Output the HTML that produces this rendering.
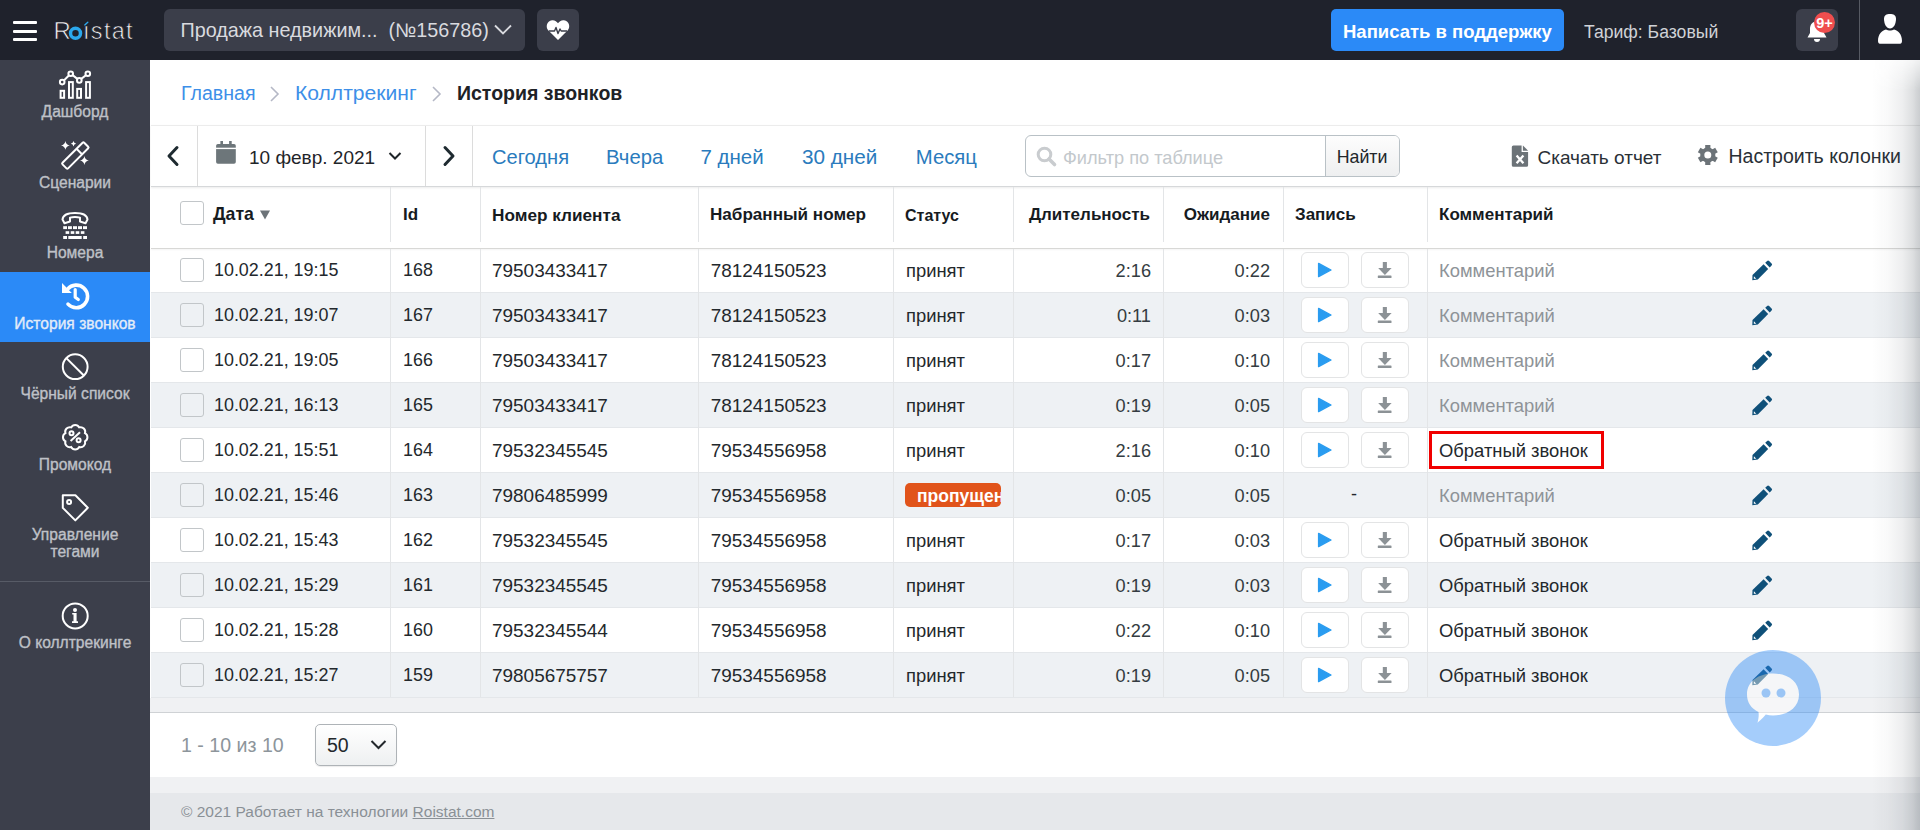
<!DOCTYPE html>
<html><head><meta charset="utf-8"><title>Roistat — История звонков</title>
<style>
html,body{margin:0;padding:0;width:1920px;height:830px;overflow:hidden;background:#fff;font-family:"Liberation Sans", sans-serif;}
.b{position:absolute;box-sizing:border-box;}
.t{position:absolute;white-space:pre;font-family:"Liberation Sans", sans-serif;}
svg.b{overflow:visible;}
</style></head><body>
<div class="b" style="left:0px;top:0px;width:1920px;height:60px;background:#1f222c;"></div>
<div class="b" style="left:13px;top:21px;width:24px;height:3px;background:#fff;border-radius:1px;"></div>
<div class="b" style="left:13px;top:29.5px;width:24px;height:3px;background:#fff;border-radius:1px;"></div>
<div class="b" style="left:13px;top:38px;width:24px;height:3px;background:#fff;border-radius:1px;"></div>
<div class="t" style="left:53.5px;top:15.38px;font-size:24px;line-height:31px;color:#f4f4f4;-webkit-text-stroke:0.7px #1f222c;">R</div>
<div class="t" style="left:83px;top:15.56px;font-size:23.5px;line-height:31px;color:#f4f4f4;letter-spacing:1.3px;-webkit-text-stroke:0.7px #1f222c;">ıstat</div>
<svg class="b" style="left:66px;top:24px" width="20" height="20" viewBox="0 0 20 20"><circle cx="9.5" cy="9.3" r="5" fill="none" stroke="#2ba8ec" stroke-width="3.5"/><path d="M18.8 0.9 L21.8 -1.8" stroke="#2ba8ec" stroke-width="1.4" stroke-linecap="round"/></svg>
<div class="b" style="left:164px;top:9px;width:361px;height:42px;background:#3b3e4a;border-radius:6px;"></div>
<div class="t" style="left:180.5px;top:17.14px;font-size:19.8px;line-height:26px;color:#d9dadf;">Продажа недвижим...&nbsp; (№156786)</div>
<svg class="b" style="left:493px;top:24px" width="20" height="12" viewBox="0 0 20 12"><path d="M2 1.5 L10 9.5 L18 1.5" fill="none" stroke="#d9dadf" stroke-width="1.8"/></svg>
<div class="b" style="left:537px;top:9px;width:42px;height:42px;background:#3b3e4a;border-radius:6px;"></div>
<svg class="b" style="left:546px;top:19px" width="24" height="22" viewBox="0 0 24 22"><path d="M12 21 L2.2 11.2 C-0.5 8.3 0.5 2 6 1.2 C8.8 0.9 10.8 2.5 12 4.2 C13.2 2.5 15.2 0.9 18 1.2 C23.5 2 24.5 8.3 21.8 11.2 Z" fill="#fff"/><path d="M3 12 L8.5 12 L10 8.5 L12 14.5 L14 10 L15.2 12 L21 12" fill="none" stroke="#3b3e4a" stroke-width="1.4" stroke-linejoin="round"/></svg>
<div class="b" style="left:1331px;top:9px;width:233px;height:42px;background:#2b8af7;border-radius:5px;"></div>
<div class="t" style="left:1343px;top:19.59px;font-size:18.5px;line-height:24px;color:#fff;font-weight:700;">Написать в поддержку</div>
<div class="t" style="left:1584px;top:21.40px;font-size:17.6px;line-height:23px;color:#d0d2d7;">Тариф: Базовый</div>
<div class="b" style="left:1796px;top:9px;width:42px;height:42px;background:#3b3e4a;border-radius:6px;"></div>
<svg class="b" style="left:1806px;top:20px" width="22" height="23" viewBox="0 0 22 23"><path d="M11 1.5 C6 1.5 4 5 4 9 L4 13 L1.5 17.5 L20.5 17.5 L18 13 L18 9 C18 5 16 1.5 11 1.5 Z" fill="#fff"/><path d="M8 19 A3 3 0 0 0 14 19 Z" fill="#fff"/></svg>
<div class="b" style="left:1814px;top:12px;width:21px;height:21px;border-radius:50%;background:#ef4e4e;"></div>
<div class="t" style="left:1812.5px;width:24px;top:13.78px;text-align:center;font-size:14.5px;line-height:19px;color:#fff;font-weight:700;">9+</div>
<div class="b" style="left:1859px;top:0px;width:1px;height:60px;background:#565a63;"></div>
<svg class="b" style="left:1877px;top:13px" width="26" height="32" viewBox="0 0 26 32"><path d="M7 6 C7 2 9.5 1 13 1 C16.5 1 19 2 19 6 C19 11 16.5 15.5 13 15.5 C9.5 15.5 7 11 7 6 Z" fill="#fff"/><path d="M1 28 C1 21 5 17.5 9 16.5 C10.5 17.3 11.5 17.6 13 17.6 C14.5 17.6 15.5 17.3 17 16.5 C21 17.5 25 21 25 28 C25 30 24 30.8 22 30.8 L4 30.8 C2 30.8 1 30 1 28 Z" fill="#fff"/></svg>
<div class="b" style="left:0px;top:60px;width:150px;height:770px;background:#3c3f4b;"></div>
<div class="b" style="left:0px;top:272px;width:150px;height:70px;background:#2b8af7;"></div>
<div class="b" style="left:0px;top:581px;width:150px;height:1px;background:#575b66;"></div>
<svg class="b" style="left:55px;top:65px" width="40" height="40" viewBox="0 0 40 40"><g stroke="#fff" fill="none" stroke-width="2"><polyline points="7.2,17.1 15.7,8.7 24.3,15.4 32.8,8.7"/><circle cx="7.2" cy="17.1" r="2.3" fill="#3c3f4b"/><circle cx="15.7" cy="8.7" r="2.3" fill="#3c3f4b"/><circle cx="24.3" cy="15.4" r="2.3" fill="#3c3f4b"/><circle cx="32.8" cy="8.7" r="2.3" fill="#3c3f4b"/><rect x="5.6" y="25.8" width="3.5" height="7"/><rect x="14" y="17.1" width="3.8" height="15.7"/><rect x="22.2" y="23.9" width="3.8" height="8.9"/><rect x="31.1" y="17.1" width="3.8" height="15.7"/></g></svg>
<svg class="b" style="left:55px;top:135px" width="40" height="40" viewBox="0 0 40 40"><g stroke="#fff" fill="none" stroke-width="2"><path d="M7.5 27.8 L27.6 7.7 Q28.4 6.9 29.2 7.7 L33.2 11.7 Q34 12.5 33.2 13.3 L13.1 33.4 Q12.3 34.2 11.5 33.4 L7.5 29.4 Q6.7 28.6 7.5 27.8 Z"/><line x1="21.5" y1="13.8" x2="27" y2="19.3"/></g><g fill="#fff"><path d="M10.4 6 Q11 9.8 14.8 10.4 Q11 11 10.4 14.8 Q9.8 11 6 10.4 Q9.8 9.8 10.4 6 Z"/><path d="M18.5 6 Q18.9 8.3 21.2 8.7 Q18.9 9.1 18.5 11.4 Q18.1 9.1 15.8 8.7 Q18.1 8.3 18.5 6 Z"/><path d="M29.4 21.1 Q30 24.9 33.8 25.5 Q30 26.1 29.4 29.9 Q28.8 26.1 25 25.5 Q28.8 24.9 29.4 21.1 Z"/></g></svg>
<svg class="b" style="left:55px;top:205px" width="40" height="40" viewBox="0 0 40 40"><path d="M7.5 14.5 Q8 8 20 8 Q32 8 32.5 14.5 L30.5 18.2 L25 16.5 L25 12.6 Q20 11.4 15 12.6 L15 16.5 L9.5 18.2 Z" stroke="#fff" fill="none" stroke-width="2" stroke-linejoin="round"/><g fill="#fff"><rect x="8.2" y="21.2" width="3.8" height="2.9"/><rect x="13" y="21.2" width="3.9" height="2.9"/><rect x="18" y="21.2" width="4" height="2.9"/><rect x="23" y="21.2" width="4" height="2.9"/><rect x="28" y="21.2" width="4" height="2.9"/><rect x="10.6" y="26.2" width="3.6" height="2.7"/><rect x="15.7" y="26.2" width="3.6" height="2.7"/><rect x="20.7" y="26.2" width="3.6" height="2.7"/><rect x="25.8" y="26.2" width="3.6" height="2.7"/><rect x="8.2" y="31" width="3.8" height="3"/><rect x="13.3" y="31" width="13.4" height="3"/><rect x="28.2" y="31" width="3.8" height="3"/></g></svg>
<svg class="b" style="left:55px;top:276px" width="40" height="40" viewBox="0 0 40 40"><path d="M12.6 13.2 A11.3 11.3 0 1 1 13 28.1" fill="none" stroke="#fff" stroke-width="3.6" stroke-linecap="round"/><path d="M7 7 L7 16.9 L16.8 16.9 Z" fill="#fff"/><path d="M20.2 13.5 L20.2 21.2 L23.3 23.5" fill="none" stroke="#fff" stroke-width="3.2" stroke-linecap="round" stroke-linejoin="round"/></svg>
<svg class="b" style="left:55px;top:346px" width="40" height="40" viewBox="0 0 40 40"><g stroke="#fff" fill="none" stroke-width="2"><circle cx="20.2" cy="20.7" r="12.4"/><line x1="11.6" y1="12.4" x2="28.6" y2="29.2"/></g></svg>
<svg class="b" style="left:55px;top:417px" width="40" height="40" viewBox="0 0 40 40"><g stroke="#fff" fill="none" stroke-width="2"><path d="M16.14 10.41 A4.6 4.6 0 0 1 24.26 10.41 A4.6 4.6 0 0 1 29.99 16.14 A4.6 4.6 0 0 1 29.99 24.26 A4.6 4.6 0 0 1 24.26 29.99 A4.6 4.6 0 0 1 16.14 29.99 A4.6 4.6 0 0 1 10.41 24.26 A4.6 4.6 0 0 1 10.41 16.14 A4.6 4.6 0 0 1 16.14 10.41 Z"/><circle cx="16.5" cy="16.3" r="2"/><circle cx="23.6" cy="23.2" r="2"/><line x1="15.6" y1="24" x2="25" y2="15.2"/></g></svg>
<svg class="b" style="left:55px;top:488px" width="40" height="40" viewBox="0 0 40 40"><g stroke="#fff" fill="none" stroke-width="2" stroke-linejoin="round"><path d="M7.8 7.3 L20.4 7.3 L32.8 19.8 L20.3 32.4 L7.8 19.9 Z"/><circle cx="14.1" cy="14" r="2"/></g></svg>
<svg class="b" style="left:55px;top:596px" width="40" height="40" viewBox="0 0 40 40"><circle cx="20.2" cy="19.9" r="12.5" stroke="#fff" fill="none" stroke-width="2"/><g fill="#fff"><circle cx="20" cy="14" r="2"/><path d="M17.2 17 L21.6 17 L21.6 25.3 L23 25.3 L23 27 L17 27 L17 25.3 L18.5 25.3 L18.5 18.5 L17.2 18.5 Z"/></g></svg>
<div class="t" style="left:0.0px;width:150px;top:102.39px;text-align:center;font-size:15.6px;line-height:20px;color:#bfc1c7;-webkit-text-stroke:0.35px currentColor;">Дашборд</div>
<div class="t" style="left:0.0px;width:150px;top:173.09px;text-align:center;font-size:15.6px;line-height:20px;color:#bfc1c7;-webkit-text-stroke:0.35px currentColor;">Сценарии</div>
<div class="t" style="left:0.0px;width:150px;top:242.79px;text-align:center;font-size:15.6px;line-height:20px;color:#bfc1c7;-webkit-text-stroke:0.35px currentColor;">Номера</div>
<div class="t" style="left:0.0px;width:150px;top:313.99px;text-align:center;font-size:15.6px;line-height:20px;color:#e4ecf8;-webkit-text-stroke:0.35px currentColor;">История звонков</div>
<div class="t" style="left:0.0px;width:150px;top:384.29px;text-align:center;font-size:15.6px;line-height:20px;color:#bfc1c7;-webkit-text-stroke:0.35px currentColor;">Чёрный список</div>
<div class="t" style="left:0.0px;width:150px;top:455.29px;text-align:center;font-size:15.6px;line-height:20px;color:#bfc1c7;-webkit-text-stroke:0.35px currentColor;">Промокод</div>
<div class="t" style="left:0.0px;width:150px;top:524.99px;text-align:center;font-size:15.6px;line-height:20px;color:#bfc1c7;-webkit-text-stroke:0.35px currentColor;">Управление</div>
<div class="t" style="left:0.0px;width:150px;top:542.29px;text-align:center;font-size:15.6px;line-height:20px;color:#bfc1c7;-webkit-text-stroke:0.35px currentColor;">тегами</div>
<div class="t" style="left:0.0px;width:150px;top:633.19px;text-align:center;font-size:15.6px;line-height:20px;color:#bfc1c7;-webkit-text-stroke:0.35px currentColor;">О коллтрекинге</div>
<div class="t" style="left:181px;top:80.71px;font-size:19.6px;line-height:25px;color:#3d8fe8;">Главная</div>
<svg class="b" style="left:268px;top:85px" width="14" height="18" viewBox="0 0 14 18"><path d="M3 2 L10 9 L3 16" fill="none" stroke="#b5b8c6" stroke-width="1.6"/></svg>
<div class="t" style="left:295px;top:79.19px;font-size:21.1px;line-height:27px;color:#3d8fe8;">Коллтрекинг</div>
<svg class="b" style="left:430px;top:85px" width="14" height="18" viewBox="0 0 14 18"><path d="M3 2 L10 9 L3 16" fill="none" stroke="#b5b8c6" stroke-width="1.6"/></svg>
<div class="t" style="left:457px;top:80.74px;font-size:19.5px;line-height:25px;color:#1e2226;font-weight:700;">История звонков</div>
<div class="b" style="left:151px;top:125px;width:1769px;height:62px;border-top:1px solid #ececec;border-bottom:1px solid #d6d8da;box-shadow:0 1px 2px rgba(0,0,0,0.08);background:#fff;"></div>
<div class="b" style="left:197px;top:126px;width:1px;height:60px;background:#dcdcdc;"></div>
<div class="b" style="left:425px;top:126px;width:1px;height:60px;background:#dcdcdc;"></div>
<div class="b" style="left:472px;top:126px;width:1px;height:60px;background:#dcdcdc;"></div>
<svg class="b" style="left:164px;top:145px" width="18" height="22" viewBox="0 0 18 22"><path d="M13 2.5 L5 11 L13 19.5" fill="none" stroke="#1e2a30" stroke-width="3" stroke-linecap="round" stroke-linejoin="round"/></svg>
<svg class="b" style="left:440px;top:145px" width="18" height="22" viewBox="0 0 18 22"><path d="M5 2.5 L13 11 L5 19.5" fill="none" stroke="#1e2a30" stroke-width="3" stroke-linecap="round" stroke-linejoin="round"/></svg>
<svg class="b" style="left:214px;top:139px" width="24" height="27" viewBox="0 0 24 27"><rect x="2.1" y="5" width="19.7" height="19.8" rx="1.8" fill="#6d767a"/><rect x="6.4" y="2" width="2.6" height="4" fill="#6d767a"/><rect x="15.1" y="2" width="2.6" height="4" fill="#6d767a"/><rect x="1" y="8.7" width="22" height="1.4" fill="#fff"/></svg>
<div class="t" style="left:249px;top:144.92px;font-size:19px;line-height:25px;color:#1f2529;">10 февр. 2021</div>
<svg class="b" style="left:387px;top:150px" width="16" height="12" viewBox="0 0 16 12"><path d="M2.5 3 L8 8.5 L13.5 3" fill="none" stroke="#1f2529" stroke-width="2"/></svg>
<div class="t" style="left:492px;top:144.04px;font-size:20.1px;line-height:26px;color:#2a7bbd;">Сегодня</div>
<div class="t" style="left:606px;top:143.97px;font-size:20.3px;line-height:26px;color:#2a7bbd;">Вчера</div>
<div class="t" style="left:700.4px;top:143.40px;font-size:20.5px;line-height:27px;color:#2a7bbd;">7 дней</div>
<div class="t" style="left:802px;top:143.33px;font-size:20.7px;line-height:27px;color:#2a7bbd;">30 дней</div>
<div class="t" style="left:915.8px;top:143.97px;font-size:20.3px;line-height:26px;color:#2a7bbd;">Месяц</div>
<div class="b" style="left:1025px;top:135px;width:375px;height:42px;border:1px solid #b9c1c6;border-radius:6px;background:#fff;"></div>
<div class="b" style="left:1325px;top:136px;width:74px;height:40px;border-left:1px solid #b9c1c6;border-radius:0 5px 5px 0;background:linear-gradient(#fdfdfd,#eeeff0);"></div>
<svg class="b" style="left:1035px;top:145px" width="24" height="24" viewBox="0 0 24 24"><circle cx="9.5" cy="9.5" r="6.3" fill="none" stroke="#c9cccf" stroke-width="3"/><line x1="14" y1="14" x2="19.5" y2="19.5" stroke="#c9cccf" stroke-width="3.6" stroke-linecap="round"/></svg>
<div class="t" style="left:1063px;top:145.69px;font-size:18.2px;line-height:24px;color:#c3c8cc;">Фильтр по таблице</div>
<div class="t" style="left:1336.7px;top:146.33px;font-size:17.8px;line-height:23px;color:#22272b;">Найти</div>
<svg class="b" style="left:1510px;top:144px" width="20" height="24" viewBox="0 0 20 24"><path d="M1.8 3 Q1.8 1.4 3.4 1.4 L11.6 1.4 L11.6 8.1 L18.1 8.1 L18.1 21.2 Q18.1 22.8 16.5 22.8 L3.4 22.8 Q1.8 22.8 1.8 21.2 Z" fill="#6c7378"/><path d="M12.9 1.4 L18.1 6.7 L12.9 6.7 Z" fill="#6c7378"/><path d="M6.6 11.6 L13.4 19.2 M13.4 11.6 L6.6 19.2" stroke="#fff" stroke-width="2.3"/></svg>
<div class="t" style="left:1537.5px;top:144.62px;font-size:19px;line-height:25px;color:#2a3036;">Скачать отчет</div>
<svg class="b" style="left:1697px;top:144px" width="22" height="22" viewBox="0 0 22 22"><g transform="translate(10.8,11)" fill="#6c7378"><circle r="7.6"/><rect x="-2.6" y="-10" width="5.2" height="20"/><rect x="-2.6" y="-10" width="5.2" height="20" transform="rotate(60)"/><rect x="-2.6" y="-10" width="5.2" height="20" transform="rotate(120)"/><circle r="3.5" fill="#fff"/></g></svg>
<div class="t" style="left:1728.5px;top:144.44px;font-size:19.5px;line-height:25px;color:#2a3036;">Настроить колонки</div>
<div class="b" style="left:390px;top:187px;width:1px;height:55px;background:#e3e5e7;"></div>
<div class="b" style="left:480px;top:187px;width:1px;height:55px;background:#e3e5e7;"></div>
<div class="b" style="left:698px;top:187px;width:1px;height:55px;background:#e3e5e7;"></div>
<div class="b" style="left:893px;top:187px;width:1px;height:55px;background:#e3e5e7;"></div>
<div class="b" style="left:1013px;top:187px;width:1px;height:55px;background:#e3e5e7;"></div>
<div class="b" style="left:1163px;top:187px;width:1px;height:55px;background:#e3e5e7;"></div>
<div class="b" style="left:1283px;top:187px;width:1px;height:55px;background:#e3e5e7;"></div>
<div class="b" style="left:1427px;top:187px;width:1px;height:55px;background:#e3e5e7;"></div>
<div class="b" style="left:151px;top:248px;width:1769px;height:1px;background:#d8d8d6;box-shadow:0 1px 2px rgba(0,0,0,0.07);"></div>
<div class="b" style="left:180px;top:201px;width:24px;height:24px;border:1.5px solid #c2c6c9;border-radius:3px;background:#fff;"></div>
<div class="t" style="left:213px;top:203.37px;font-size:17.7px;line-height:23px;color:#161b1f;font-weight:700;">Дата</div>
<svg class="b" style="left:259px;top:209px" width="12" height="12" viewBox="0 0 12 12"><path d="M1 1.5 L11 1.5 L6 10.5 Z" fill="#6c7378"/></svg>
<div class="t" style="left:403px;top:204.11px;font-size:17px;line-height:22px;color:#161b1f;font-weight:700;">Id</div>
<div class="t" style="left:492px;top:204.04px;font-size:17.2px;line-height:22px;color:#161b1f;font-weight:700;">Номер клиента</div>
<div class="t" style="left:710px;top:204.07px;font-size:17.1px;line-height:22px;color:#161b1f;font-weight:700;">Набранный номер</div>
<div class="t" style="left:905px;top:204.96px;font-size:16px;line-height:21px;color:#161b1f;font-weight:700;">Статус</div>
<div class="t" style="right:770px;top:204.11px;text-align:right;font-size:17px;line-height:22px;color:#161b1f;font-weight:700;">Длительность</div>
<div class="t" style="right:650px;top:204.11px;text-align:right;font-size:17px;line-height:22px;color:#161b1f;font-weight:700;">Ожидание</div>
<div class="t" style="left:1295px;top:204.11px;font-size:17px;line-height:22px;color:#161b1f;font-weight:700;">Запись</div>
<div class="t" style="left:1439px;top:204.11px;font-size:17px;line-height:22px;color:#161b1f;font-weight:700;">Комментарий</div>
<div class="b" style="left:151px;top:292px;width:1769px;height:45px;background:#eef1f4;"></div>
<div class="b" style="left:151px;top:292px;width:1769px;height:1px;background:#e4e7ea;"></div>
<div class="b" style="left:151px;top:337px;width:1769px;height:1px;background:#e4e7ea;"></div>
<div class="b" style="left:151px;top:382px;width:1769px;height:45px;background:#eef1f4;"></div>
<div class="b" style="left:151px;top:382px;width:1769px;height:1px;background:#e4e7ea;"></div>
<div class="b" style="left:151px;top:427px;width:1769px;height:1px;background:#e4e7ea;"></div>
<div class="b" style="left:151px;top:472px;width:1769px;height:45px;background:#eef1f4;"></div>
<div class="b" style="left:151px;top:472px;width:1769px;height:1px;background:#e4e7ea;"></div>
<div class="b" style="left:151px;top:517px;width:1769px;height:1px;background:#e4e7ea;"></div>
<div class="b" style="left:151px;top:562px;width:1769px;height:45px;background:#eef1f4;"></div>
<div class="b" style="left:151px;top:562px;width:1769px;height:1px;background:#e4e7ea;"></div>
<div class="b" style="left:151px;top:607px;width:1769px;height:1px;background:#e4e7ea;"></div>
<div class="b" style="left:151px;top:652px;width:1769px;height:45px;background:#eef1f4;"></div>
<div class="b" style="left:151px;top:652px;width:1769px;height:1px;background:#e4e7ea;"></div>
<div class="b" style="left:390px;top:249px;width:1px;height:448px;background:#e3e5e7;"></div>
<div class="b" style="left:480px;top:249px;width:1px;height:448px;background:#e3e5e7;"></div>
<div class="b" style="left:698px;top:249px;width:1px;height:448px;background:#e3e5e7;"></div>
<div class="b" style="left:893px;top:249px;width:1px;height:448px;background:#e3e5e7;"></div>
<div class="b" style="left:1013px;top:249px;width:1px;height:448px;background:#e3e5e7;"></div>
<div class="b" style="left:1163px;top:249px;width:1px;height:448px;background:#e3e5e7;"></div>
<div class="b" style="left:1283px;top:249px;width:1px;height:448px;background:#e3e5e7;"></div>
<div class="b" style="left:1427px;top:249px;width:1px;height:448px;background:#e3e5e7;"></div>
<div class="b" style="left:151px;top:697px;width:1769px;height:1px;background:#e4e7ea;"></div>
<div class="b" style="left:180px;top:258px;width:24px;height:24px;border:1.5px solid #c2c6c9;border-radius:3px;"></div>
<div class="t" style="left:214px;top:259.30px;font-size:17.9px;line-height:23px;color:#23282c;">10.02.21, 19:15</div>
<div class="t" style="left:403px;top:259.30px;font-size:17.9px;line-height:23px;color:#23282c;">168</div>
<div class="t" style="left:492px;top:257.93px;font-size:18.95px;line-height:25px;color:#23282c;">79503433417</div>
<div class="t" style="left:710.7px;top:257.93px;font-size:18.95px;line-height:25px;color:#23282c;">78124150523</div>
<div class="t" style="left:906px;top:258.62px;font-size:18.4px;line-height:24px;color:#23282c;">принят</div>
<div class="t" style="right:769px;top:258.69px;text-align:right;font-size:18.2px;line-height:24px;color:#343c41;">2:16</div>
<div class="t" style="right:650px;top:258.69px;text-align:right;font-size:18.2px;line-height:24px;color:#343c41;">0:22</div>
<div class="b" style="left:1301px;top:252px;width:48px;height:36px;border:1px solid #e3e4e5;border-radius:6px;background:#fff;"></div>
<div class="b" style="left:1361px;top:252px;width:48px;height:36px;border:1px solid #e3e4e5;border-radius:6px;background:#fff;"></div>
<svg class="b" style="left:1317px;top:262px" width="16" height="17" viewBox="0 0 16 17"><path d="M1.6 1.4 L14 8 L1.6 14.6 Z" fill="#2a9cf0" stroke="#2a9cf0" stroke-width="1.4" stroke-linejoin="round"/></svg>
<svg class="b" style="left:1376px;top:262px" width="18" height="17" viewBox="0 0 18 17"><rect x="6.8" y="0" width="4.1" height="6.5" fill="#8c9296"/><path d="M2.2 6 L15.6 6 L8.9 13 Z" fill="#8c9296"/><rect x="1.8" y="13.5" width="13.7" height="2.6" rx="0.6" fill="#8c9296"/></svg>
<div class="t" style="left:1439px;top:258.62px;font-size:18.4px;line-height:24px;color:#8e9398;">Комментарий</div>
<svg class="b" style="left:1751px;top:260px" width="22" height="22" viewBox="0 0 22 22"><path d="M14.2 2.8 L16.1 0.9 Q17.1 -0.1 18.1 0.9 L20.6 3.4 Q21.6 4.4 20.6 5.4 L18.7 7.4 Z" fill="#0f5079"/><path d="M12.6 4.3 L17.2 8.9 L6.8 19.4 L1.3 20.3 L1.5 14.9 Z" fill="#0f5079"/><path d="M2.9 16.2 L2.8 18.8 L5.3 18.7 L4.3 17.7 L3.9 17.2 Z" fill="#fff"/></svg>
<div class="b" style="left:180px;top:303px;width:24px;height:24px;border:1.5px solid #c2c6c9;border-radius:3px;"></div>
<div class="t" style="left:214px;top:304.30px;font-size:17.9px;line-height:23px;color:#23282c;">10.02.21, 19:07</div>
<div class="t" style="left:403px;top:304.30px;font-size:17.9px;line-height:23px;color:#23282c;">167</div>
<div class="t" style="left:492px;top:302.93px;font-size:18.95px;line-height:25px;color:#23282c;">79503433417</div>
<div class="t" style="left:710.7px;top:302.93px;font-size:18.95px;line-height:25px;color:#23282c;">78124150523</div>
<div class="t" style="left:906px;top:303.62px;font-size:18.4px;line-height:24px;color:#23282c;">принят</div>
<div class="t" style="right:769px;top:303.69px;text-align:right;font-size:18.2px;line-height:24px;color:#343c41;">0:11</div>
<div class="t" style="right:650px;top:303.69px;text-align:right;font-size:18.2px;line-height:24px;color:#343c41;">0:03</div>
<div class="b" style="left:1301px;top:297px;width:48px;height:36px;border:1px solid #e3e4e5;border-radius:6px;background:#fff;"></div>
<div class="b" style="left:1361px;top:297px;width:48px;height:36px;border:1px solid #e3e4e5;border-radius:6px;background:#fff;"></div>
<svg class="b" style="left:1317px;top:307px" width="16" height="17" viewBox="0 0 16 17"><path d="M1.6 1.4 L14 8 L1.6 14.6 Z" fill="#2a9cf0" stroke="#2a9cf0" stroke-width="1.4" stroke-linejoin="round"/></svg>
<svg class="b" style="left:1376px;top:307px" width="18" height="17" viewBox="0 0 18 17"><rect x="6.8" y="0" width="4.1" height="6.5" fill="#8c9296"/><path d="M2.2 6 L15.6 6 L8.9 13 Z" fill="#8c9296"/><rect x="1.8" y="13.5" width="13.7" height="2.6" rx="0.6" fill="#8c9296"/></svg>
<div class="t" style="left:1439px;top:303.62px;font-size:18.4px;line-height:24px;color:#8e9398;">Комментарий</div>
<svg class="b" style="left:1751px;top:305px" width="22" height="22" viewBox="0 0 22 22"><path d="M14.2 2.8 L16.1 0.9 Q17.1 -0.1 18.1 0.9 L20.6 3.4 Q21.6 4.4 20.6 5.4 L18.7 7.4 Z" fill="#0f5079"/><path d="M12.6 4.3 L17.2 8.9 L6.8 19.4 L1.3 20.3 L1.5 14.9 Z" fill="#0f5079"/><path d="M2.9 16.2 L2.8 18.8 L5.3 18.7 L4.3 17.7 L3.9 17.2 Z" fill="#fff"/></svg>
<div class="b" style="left:180px;top:348px;width:24px;height:24px;border:1.5px solid #c2c6c9;border-radius:3px;"></div>
<div class="t" style="left:214px;top:349.30px;font-size:17.9px;line-height:23px;color:#23282c;">10.02.21, 19:05</div>
<div class="t" style="left:403px;top:349.30px;font-size:17.9px;line-height:23px;color:#23282c;">166</div>
<div class="t" style="left:492px;top:347.93px;font-size:18.95px;line-height:25px;color:#23282c;">79503433417</div>
<div class="t" style="left:710.7px;top:347.93px;font-size:18.95px;line-height:25px;color:#23282c;">78124150523</div>
<div class="t" style="left:906px;top:348.62px;font-size:18.4px;line-height:24px;color:#23282c;">принят</div>
<div class="t" style="right:769px;top:348.69px;text-align:right;font-size:18.2px;line-height:24px;color:#343c41;">0:17</div>
<div class="t" style="right:650px;top:348.69px;text-align:right;font-size:18.2px;line-height:24px;color:#343c41;">0:10</div>
<div class="b" style="left:1301px;top:342px;width:48px;height:36px;border:1px solid #e3e4e5;border-radius:6px;background:#fff;"></div>
<div class="b" style="left:1361px;top:342px;width:48px;height:36px;border:1px solid #e3e4e5;border-radius:6px;background:#fff;"></div>
<svg class="b" style="left:1317px;top:352px" width="16" height="17" viewBox="0 0 16 17"><path d="M1.6 1.4 L14 8 L1.6 14.6 Z" fill="#2a9cf0" stroke="#2a9cf0" stroke-width="1.4" stroke-linejoin="round"/></svg>
<svg class="b" style="left:1376px;top:352px" width="18" height="17" viewBox="0 0 18 17"><rect x="6.8" y="0" width="4.1" height="6.5" fill="#8c9296"/><path d="M2.2 6 L15.6 6 L8.9 13 Z" fill="#8c9296"/><rect x="1.8" y="13.5" width="13.7" height="2.6" rx="0.6" fill="#8c9296"/></svg>
<div class="t" style="left:1439px;top:348.62px;font-size:18.4px;line-height:24px;color:#8e9398;">Комментарий</div>
<svg class="b" style="left:1751px;top:350px" width="22" height="22" viewBox="0 0 22 22"><path d="M14.2 2.8 L16.1 0.9 Q17.1 -0.1 18.1 0.9 L20.6 3.4 Q21.6 4.4 20.6 5.4 L18.7 7.4 Z" fill="#0f5079"/><path d="M12.6 4.3 L17.2 8.9 L6.8 19.4 L1.3 20.3 L1.5 14.9 Z" fill="#0f5079"/><path d="M2.9 16.2 L2.8 18.8 L5.3 18.7 L4.3 17.7 L3.9 17.2 Z" fill="#fff"/></svg>
<div class="b" style="left:180px;top:393px;width:24px;height:24px;border:1.5px solid #c2c6c9;border-radius:3px;"></div>
<div class="t" style="left:214px;top:394.30px;font-size:17.9px;line-height:23px;color:#23282c;">10.02.21, 16:13</div>
<div class="t" style="left:403px;top:394.30px;font-size:17.9px;line-height:23px;color:#23282c;">165</div>
<div class="t" style="left:492px;top:392.93px;font-size:18.95px;line-height:25px;color:#23282c;">79503433417</div>
<div class="t" style="left:710.7px;top:392.93px;font-size:18.95px;line-height:25px;color:#23282c;">78124150523</div>
<div class="t" style="left:906px;top:393.62px;font-size:18.4px;line-height:24px;color:#23282c;">принят</div>
<div class="t" style="right:769px;top:393.69px;text-align:right;font-size:18.2px;line-height:24px;color:#343c41;">0:19</div>
<div class="t" style="right:650px;top:393.69px;text-align:right;font-size:18.2px;line-height:24px;color:#343c41;">0:05</div>
<div class="b" style="left:1301px;top:387px;width:48px;height:36px;border:1px solid #e3e4e5;border-radius:6px;background:#fff;"></div>
<div class="b" style="left:1361px;top:387px;width:48px;height:36px;border:1px solid #e3e4e5;border-radius:6px;background:#fff;"></div>
<svg class="b" style="left:1317px;top:397px" width="16" height="17" viewBox="0 0 16 17"><path d="M1.6 1.4 L14 8 L1.6 14.6 Z" fill="#2a9cf0" stroke="#2a9cf0" stroke-width="1.4" stroke-linejoin="round"/></svg>
<svg class="b" style="left:1376px;top:397px" width="18" height="17" viewBox="0 0 18 17"><rect x="6.8" y="0" width="4.1" height="6.5" fill="#8c9296"/><path d="M2.2 6 L15.6 6 L8.9 13 Z" fill="#8c9296"/><rect x="1.8" y="13.5" width="13.7" height="2.6" rx="0.6" fill="#8c9296"/></svg>
<div class="t" style="left:1439px;top:393.62px;font-size:18.4px;line-height:24px;color:#8e9398;">Комментарий</div>
<svg class="b" style="left:1751px;top:395px" width="22" height="22" viewBox="0 0 22 22"><path d="M14.2 2.8 L16.1 0.9 Q17.1 -0.1 18.1 0.9 L20.6 3.4 Q21.6 4.4 20.6 5.4 L18.7 7.4 Z" fill="#0f5079"/><path d="M12.6 4.3 L17.2 8.9 L6.8 19.4 L1.3 20.3 L1.5 14.9 Z" fill="#0f5079"/><path d="M2.9 16.2 L2.8 18.8 L5.3 18.7 L4.3 17.7 L3.9 17.2 Z" fill="#fff"/></svg>
<div class="b" style="left:180px;top:438px;width:24px;height:24px;border:1.5px solid #c2c6c9;border-radius:3px;"></div>
<div class="t" style="left:214px;top:439.30px;font-size:17.9px;line-height:23px;color:#23282c;">10.02.21, 15:51</div>
<div class="t" style="left:403px;top:439.30px;font-size:17.9px;line-height:23px;color:#23282c;">164</div>
<div class="t" style="left:492px;top:437.93px;font-size:18.95px;line-height:25px;color:#23282c;">79532345545</div>
<div class="t" style="left:710.7px;top:437.93px;font-size:18.95px;line-height:25px;color:#23282c;">79534556958</div>
<div class="t" style="left:906px;top:438.62px;font-size:18.4px;line-height:24px;color:#23282c;">принят</div>
<div class="t" style="right:769px;top:438.69px;text-align:right;font-size:18.2px;line-height:24px;color:#343c41;">2:16</div>
<div class="t" style="right:650px;top:438.69px;text-align:right;font-size:18.2px;line-height:24px;color:#343c41;">0:10</div>
<div class="b" style="left:1301px;top:432px;width:48px;height:36px;border:1px solid #e3e4e5;border-radius:6px;background:#fff;"></div>
<div class="b" style="left:1361px;top:432px;width:48px;height:36px;border:1px solid #e3e4e5;border-radius:6px;background:#fff;"></div>
<svg class="b" style="left:1317px;top:442px" width="16" height="17" viewBox="0 0 16 17"><path d="M1.6 1.4 L14 8 L1.6 14.6 Z" fill="#2a9cf0" stroke="#2a9cf0" stroke-width="1.4" stroke-linejoin="round"/></svg>
<svg class="b" style="left:1376px;top:442px" width="18" height="17" viewBox="0 0 18 17"><rect x="6.8" y="0" width="4.1" height="6.5" fill="#8c9296"/><path d="M2.2 6 L15.6 6 L8.9 13 Z" fill="#8c9296"/><rect x="1.8" y="13.5" width="13.7" height="2.6" rx="0.6" fill="#8c9296"/></svg>
<div class="t" style="left:1439px;top:438.62px;font-size:18.4px;line-height:24px;color:#23282c;">Обратный звонок</div>
<svg class="b" style="left:1751px;top:440px" width="22" height="22" viewBox="0 0 22 22"><path d="M14.2 2.8 L16.1 0.9 Q17.1 -0.1 18.1 0.9 L20.6 3.4 Q21.6 4.4 20.6 5.4 L18.7 7.4 Z" fill="#0f5079"/><path d="M12.6 4.3 L17.2 8.9 L6.8 19.4 L1.3 20.3 L1.5 14.9 Z" fill="#0f5079"/><path d="M2.9 16.2 L2.8 18.8 L5.3 18.7 L4.3 17.7 L3.9 17.2 Z" fill="#fff"/></svg>
<div class="b" style="left:180px;top:483px;width:24px;height:24px;border:1.5px solid #c2c6c9;border-radius:3px;"></div>
<div class="t" style="left:214px;top:484.30px;font-size:17.9px;line-height:23px;color:#23282c;">10.02.21, 15:46</div>
<div class="t" style="left:403px;top:484.30px;font-size:17.9px;line-height:23px;color:#23282c;">163</div>
<div class="t" style="left:492px;top:482.93px;font-size:18.95px;line-height:25px;color:#23282c;">79806485999</div>
<div class="t" style="left:710.7px;top:482.93px;font-size:18.95px;line-height:25px;color:#23282c;">79534556958</div>
<div class="b" style="left:905px;top:483px;width:96px;height:24px;border-radius:5px;background:#e1541b;overflow:hidden;"><div class="t" style="left:12px;top:2px;font-size:17.5px;line-height:22px;color:#fff;font-weight:700;">пропущен</div></div>
<div class="t" style="right:769px;top:483.69px;text-align:right;font-size:18.2px;line-height:24px;color:#343c41;">0:05</div>
<div class="t" style="right:650px;top:483.69px;text-align:right;font-size:18.2px;line-height:24px;color:#343c41;">0:05</div>
<div class="t" style="left:1344.0px;width:20px;top:483.26px;text-align:center;font-size:18px;line-height:23px;color:#23282c;">-</div>
<div class="t" style="left:1439px;top:483.62px;font-size:18.4px;line-height:24px;color:#8e9398;">Комментарий</div>
<svg class="b" style="left:1751px;top:485px" width="22" height="22" viewBox="0 0 22 22"><path d="M14.2 2.8 L16.1 0.9 Q17.1 -0.1 18.1 0.9 L20.6 3.4 Q21.6 4.4 20.6 5.4 L18.7 7.4 Z" fill="#0f5079"/><path d="M12.6 4.3 L17.2 8.9 L6.8 19.4 L1.3 20.3 L1.5 14.9 Z" fill="#0f5079"/><path d="M2.9 16.2 L2.8 18.8 L5.3 18.7 L4.3 17.7 L3.9 17.2 Z" fill="#fff"/></svg>
<div class="b" style="left:180px;top:528px;width:24px;height:24px;border:1.5px solid #c2c6c9;border-radius:3px;"></div>
<div class="t" style="left:214px;top:529.30px;font-size:17.9px;line-height:23px;color:#23282c;">10.02.21, 15:43</div>
<div class="t" style="left:403px;top:529.30px;font-size:17.9px;line-height:23px;color:#23282c;">162</div>
<div class="t" style="left:492px;top:527.93px;font-size:18.95px;line-height:25px;color:#23282c;">79532345545</div>
<div class="t" style="left:710.7px;top:527.93px;font-size:18.95px;line-height:25px;color:#23282c;">79534556958</div>
<div class="t" style="left:906px;top:528.62px;font-size:18.4px;line-height:24px;color:#23282c;">принят</div>
<div class="t" style="right:769px;top:528.69px;text-align:right;font-size:18.2px;line-height:24px;color:#343c41;">0:17</div>
<div class="t" style="right:650px;top:528.69px;text-align:right;font-size:18.2px;line-height:24px;color:#343c41;">0:03</div>
<div class="b" style="left:1301px;top:522px;width:48px;height:36px;border:1px solid #e3e4e5;border-radius:6px;background:#fff;"></div>
<div class="b" style="left:1361px;top:522px;width:48px;height:36px;border:1px solid #e3e4e5;border-radius:6px;background:#fff;"></div>
<svg class="b" style="left:1317px;top:532px" width="16" height="17" viewBox="0 0 16 17"><path d="M1.6 1.4 L14 8 L1.6 14.6 Z" fill="#2a9cf0" stroke="#2a9cf0" stroke-width="1.4" stroke-linejoin="round"/></svg>
<svg class="b" style="left:1376px;top:532px" width="18" height="17" viewBox="0 0 18 17"><rect x="6.8" y="0" width="4.1" height="6.5" fill="#8c9296"/><path d="M2.2 6 L15.6 6 L8.9 13 Z" fill="#8c9296"/><rect x="1.8" y="13.5" width="13.7" height="2.6" rx="0.6" fill="#8c9296"/></svg>
<div class="t" style="left:1439px;top:528.62px;font-size:18.4px;line-height:24px;color:#23282c;">Обратный звонок</div>
<svg class="b" style="left:1751px;top:530px" width="22" height="22" viewBox="0 0 22 22"><path d="M14.2 2.8 L16.1 0.9 Q17.1 -0.1 18.1 0.9 L20.6 3.4 Q21.6 4.4 20.6 5.4 L18.7 7.4 Z" fill="#0f5079"/><path d="M12.6 4.3 L17.2 8.9 L6.8 19.4 L1.3 20.3 L1.5 14.9 Z" fill="#0f5079"/><path d="M2.9 16.2 L2.8 18.8 L5.3 18.7 L4.3 17.7 L3.9 17.2 Z" fill="#fff"/></svg>
<div class="b" style="left:180px;top:573px;width:24px;height:24px;border:1.5px solid #c2c6c9;border-radius:3px;"></div>
<div class="t" style="left:214px;top:574.30px;font-size:17.9px;line-height:23px;color:#23282c;">10.02.21, 15:29</div>
<div class="t" style="left:403px;top:574.30px;font-size:17.9px;line-height:23px;color:#23282c;">161</div>
<div class="t" style="left:492px;top:572.93px;font-size:18.95px;line-height:25px;color:#23282c;">79532345545</div>
<div class="t" style="left:710.7px;top:572.93px;font-size:18.95px;line-height:25px;color:#23282c;">79534556958</div>
<div class="t" style="left:906px;top:573.62px;font-size:18.4px;line-height:24px;color:#23282c;">принят</div>
<div class="t" style="right:769px;top:573.69px;text-align:right;font-size:18.2px;line-height:24px;color:#343c41;">0:19</div>
<div class="t" style="right:650px;top:573.69px;text-align:right;font-size:18.2px;line-height:24px;color:#343c41;">0:03</div>
<div class="b" style="left:1301px;top:567px;width:48px;height:36px;border:1px solid #e3e4e5;border-radius:6px;background:#fff;"></div>
<div class="b" style="left:1361px;top:567px;width:48px;height:36px;border:1px solid #e3e4e5;border-radius:6px;background:#fff;"></div>
<svg class="b" style="left:1317px;top:577px" width="16" height="17" viewBox="0 0 16 17"><path d="M1.6 1.4 L14 8 L1.6 14.6 Z" fill="#2a9cf0" stroke="#2a9cf0" stroke-width="1.4" stroke-linejoin="round"/></svg>
<svg class="b" style="left:1376px;top:577px" width="18" height="17" viewBox="0 0 18 17"><rect x="6.8" y="0" width="4.1" height="6.5" fill="#8c9296"/><path d="M2.2 6 L15.6 6 L8.9 13 Z" fill="#8c9296"/><rect x="1.8" y="13.5" width="13.7" height="2.6" rx="0.6" fill="#8c9296"/></svg>
<div class="t" style="left:1439px;top:573.62px;font-size:18.4px;line-height:24px;color:#23282c;">Обратный звонок</div>
<svg class="b" style="left:1751px;top:575px" width="22" height="22" viewBox="0 0 22 22"><path d="M14.2 2.8 L16.1 0.9 Q17.1 -0.1 18.1 0.9 L20.6 3.4 Q21.6 4.4 20.6 5.4 L18.7 7.4 Z" fill="#0f5079"/><path d="M12.6 4.3 L17.2 8.9 L6.8 19.4 L1.3 20.3 L1.5 14.9 Z" fill="#0f5079"/><path d="M2.9 16.2 L2.8 18.8 L5.3 18.7 L4.3 17.7 L3.9 17.2 Z" fill="#fff"/></svg>
<div class="b" style="left:180px;top:618px;width:24px;height:24px;border:1.5px solid #c2c6c9;border-radius:3px;"></div>
<div class="t" style="left:214px;top:619.30px;font-size:17.9px;line-height:23px;color:#23282c;">10.02.21, 15:28</div>
<div class="t" style="left:403px;top:619.30px;font-size:17.9px;line-height:23px;color:#23282c;">160</div>
<div class="t" style="left:492px;top:617.93px;font-size:18.95px;line-height:25px;color:#23282c;">79532345544</div>
<div class="t" style="left:710.7px;top:617.93px;font-size:18.95px;line-height:25px;color:#23282c;">79534556958</div>
<div class="t" style="left:906px;top:618.62px;font-size:18.4px;line-height:24px;color:#23282c;">принят</div>
<div class="t" style="right:769px;top:618.69px;text-align:right;font-size:18.2px;line-height:24px;color:#343c41;">0:22</div>
<div class="t" style="right:650px;top:618.69px;text-align:right;font-size:18.2px;line-height:24px;color:#343c41;">0:10</div>
<div class="b" style="left:1301px;top:612px;width:48px;height:36px;border:1px solid #e3e4e5;border-radius:6px;background:#fff;"></div>
<div class="b" style="left:1361px;top:612px;width:48px;height:36px;border:1px solid #e3e4e5;border-radius:6px;background:#fff;"></div>
<svg class="b" style="left:1317px;top:622px" width="16" height="17" viewBox="0 0 16 17"><path d="M1.6 1.4 L14 8 L1.6 14.6 Z" fill="#2a9cf0" stroke="#2a9cf0" stroke-width="1.4" stroke-linejoin="round"/></svg>
<svg class="b" style="left:1376px;top:622px" width="18" height="17" viewBox="0 0 18 17"><rect x="6.8" y="0" width="4.1" height="6.5" fill="#8c9296"/><path d="M2.2 6 L15.6 6 L8.9 13 Z" fill="#8c9296"/><rect x="1.8" y="13.5" width="13.7" height="2.6" rx="0.6" fill="#8c9296"/></svg>
<div class="t" style="left:1439px;top:618.62px;font-size:18.4px;line-height:24px;color:#23282c;">Обратный звонок</div>
<svg class="b" style="left:1751px;top:620px" width="22" height="22" viewBox="0 0 22 22"><path d="M14.2 2.8 L16.1 0.9 Q17.1 -0.1 18.1 0.9 L20.6 3.4 Q21.6 4.4 20.6 5.4 L18.7 7.4 Z" fill="#0f5079"/><path d="M12.6 4.3 L17.2 8.9 L6.8 19.4 L1.3 20.3 L1.5 14.9 Z" fill="#0f5079"/><path d="M2.9 16.2 L2.8 18.8 L5.3 18.7 L4.3 17.7 L3.9 17.2 Z" fill="#fff"/></svg>
<div class="b" style="left:180px;top:663px;width:24px;height:24px;border:1.5px solid #c2c6c9;border-radius:3px;"></div>
<div class="t" style="left:214px;top:664.30px;font-size:17.9px;line-height:23px;color:#23282c;">10.02.21, 15:27</div>
<div class="t" style="left:403px;top:664.30px;font-size:17.9px;line-height:23px;color:#23282c;">159</div>
<div class="t" style="left:492px;top:662.93px;font-size:18.95px;line-height:25px;color:#23282c;">79805675757</div>
<div class="t" style="left:710.7px;top:662.93px;font-size:18.95px;line-height:25px;color:#23282c;">79534556958</div>
<div class="t" style="left:906px;top:663.62px;font-size:18.4px;line-height:24px;color:#23282c;">принят</div>
<div class="t" style="right:769px;top:663.69px;text-align:right;font-size:18.2px;line-height:24px;color:#343c41;">0:19</div>
<div class="t" style="right:650px;top:663.69px;text-align:right;font-size:18.2px;line-height:24px;color:#343c41;">0:05</div>
<div class="b" style="left:1301px;top:657px;width:48px;height:36px;border:1px solid #e3e4e5;border-radius:6px;background:#fff;"></div>
<div class="b" style="left:1361px;top:657px;width:48px;height:36px;border:1px solid #e3e4e5;border-radius:6px;background:#fff;"></div>
<svg class="b" style="left:1317px;top:667px" width="16" height="17" viewBox="0 0 16 17"><path d="M1.6 1.4 L14 8 L1.6 14.6 Z" fill="#2a9cf0" stroke="#2a9cf0" stroke-width="1.4" stroke-linejoin="round"/></svg>
<svg class="b" style="left:1376px;top:667px" width="18" height="17" viewBox="0 0 18 17"><rect x="6.8" y="0" width="4.1" height="6.5" fill="#8c9296"/><path d="M2.2 6 L15.6 6 L8.9 13 Z" fill="#8c9296"/><rect x="1.8" y="13.5" width="13.7" height="2.6" rx="0.6" fill="#8c9296"/></svg>
<div class="t" style="left:1439px;top:663.62px;font-size:18.4px;line-height:24px;color:#23282c;">Обратный звонок</div>
<svg class="b" style="left:1751px;top:665px" width="22" height="22" viewBox="0 0 22 22"><path d="M14.2 2.8 L16.1 0.9 Q17.1 -0.1 18.1 0.9 L20.6 3.4 Q21.6 4.4 20.6 5.4 L18.7 7.4 Z" fill="#0f5079"/><path d="M12.6 4.3 L17.2 8.9 L6.8 19.4 L1.3 20.3 L1.5 14.9 Z" fill="#0f5079"/><path d="M2.9 16.2 L2.8 18.8 L5.3 18.7 L4.3 17.7 L3.9 17.2 Z" fill="#fff"/></svg>
<div class="b" style="left:1429px;top:431px;width:175px;height:38px;border:3px solid #f00000;"></div>
<div class="b" style="left:150px;top:698px;width:1770px;height:14px;background:#f0f1f3;"></div>
<div class="b" style="left:150px;top:712px;width:1770px;height:1px;background:#cfd2d5;"></div>
<div class="b" style="left:150px;top:713px;width:1770px;height:64px;background:#fff;"></div>
<div class="t" style="left:181px;top:732.71px;font-size:19.6px;line-height:25px;color:#8d959b;">1 - 10 из 10</div>
<div class="b" style="left:315px;top:724px;width:82px;height:42px;border:1px solid #aeb3b7;border-radius:5px;background:linear-gradient(#ffffff,#eef0f1);box-shadow:0 1px 1px rgba(0,0,0,0.08);"></div>
<div class="t" style="left:327px;top:732.74px;font-size:19.5px;line-height:25px;color:#23282c;">50</div>
<svg class="b" style="left:369px;top:738px" width="20" height="14" viewBox="0 0 20 14"><path d="M2.5 3 L9.5 10 L16.5 3" fill="none" stroke="#23282c" stroke-width="2"/></svg>
<div class="b" style="left:150px;top:777px;width:1770px;height:16px;background:#f0f1f3;"></div>
<div class="b" style="left:150px;top:793px;width:1770px;height:37px;background:#e6e8eb;"></div>
<div class="t" style="left:181px;top:801.63px;font-size:15.5px;line-height:20px;color:#8a9096;">© 2021 Работает на технологии <u>Roistat.com</u></div>
<div class="b" style="left:1725px;top:650px;width:96px;height:96px;opacity:0.42;"><svg width="96" height="96" viewBox="0 0 96 96"><circle cx="48" cy="48" r="48" fill="#2b8af7"/><path d="M48 23.5 C62 23.5 74 31 74 44.5 C74 58 62 65.5 48 65.5 C45.5 65.5 43 65.2 40.8 64.6 C37.5 69 33 72 32.5 73 C33.5 69 34 65.5 33.5 62 C26 58.5 22 52 22 44.5 C22 31 34 23.5 48 23.5 Z" fill="#fff"/><circle cx="41" cy="43" r="4.5" fill="#2b8af7"/><circle cx="56" cy="43" r="4.5" fill="#2b8af7"/></svg></div>
<div class="b" style="left:1872px;top:60px;width:48px;height:770px;background:linear-gradient(to right,rgba(50,60,70,0),rgba(50,60,70,0.03) 35%,rgba(50,60,70,0.09) 65%,rgba(50,60,70,0.17) 85%,rgba(50,60,70,0.26));-webkit-mask-image:linear-gradient(to bottom,rgba(0,0,0,0.3),#000 30px);"></div>
</body></html>
